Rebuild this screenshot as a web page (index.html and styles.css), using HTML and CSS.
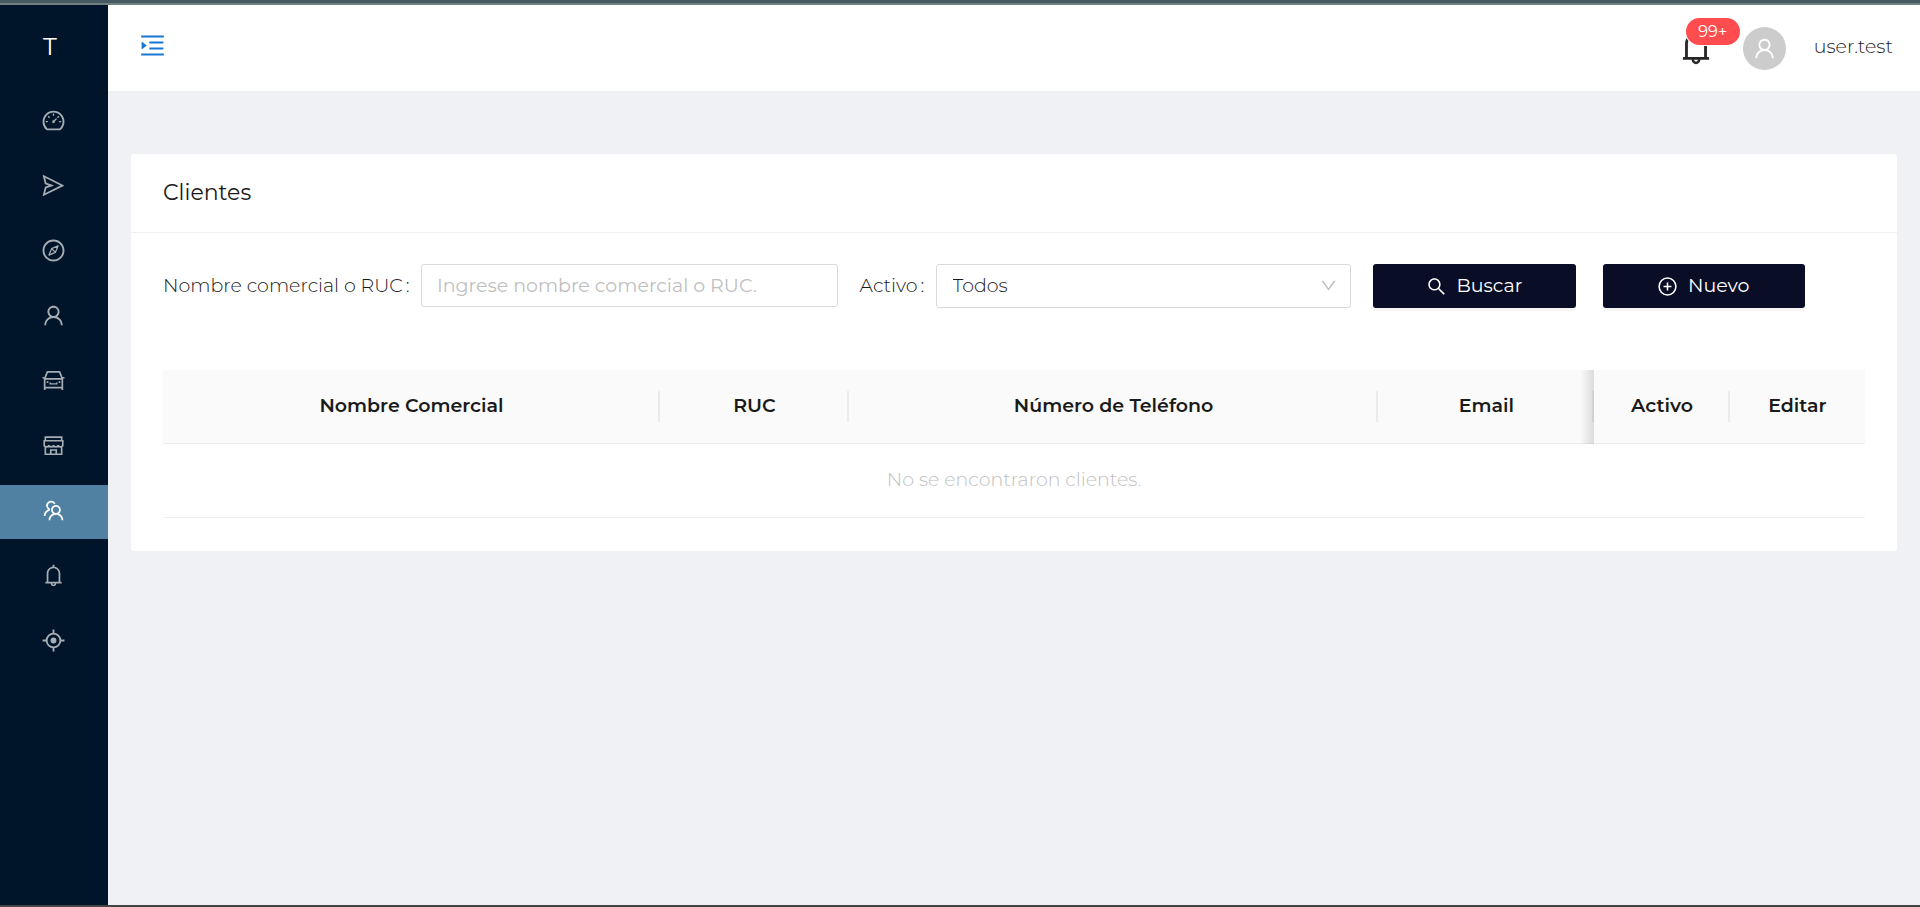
FILE: index.html
```html
<!DOCTYPE html>
<html lang="es">
<head>
<meta charset="utf-8">
<meta name="viewport" content="width=device-width, initial-scale=1">
<title>Clientes</title>
<link rel="stylesheet" href="styles.css">
</head>
<body>
<div class="app">
  <aside class="sider">
    <div class="logo">T</div>
    <nav class="menu" aria-label="Principal">
      <a class="menu-item" href="#panel" aria-label="Panel">
        <svg class="icon" viewBox="0 0 1024 1024"><path d="M924.8 385.6a446.7 446.7 0 00-96-142.4 446.7 446.7 0 00-142.4-96C631.1 123.8 572.5 112 512 112s-119.1 11.8-174.4 35.2a446.7 446.7 0 00-142.4 96 446.7 446.7 0 00-96 142.4C75.8 440.9 64 499.5 64 560c0 132.7 58.3 257.7 159.9 343.1l1.7 1.4c5.8 4.8 13.1 7.5 20.6 7.5h531.7c7.5 0 14.8-2.7 20.6-7.5l1.7-1.4C901.7 817.7 960 692.7 960 560c0-60.5-11.9-119.1-35.2-174.4zM761.4 836H262.6A371.12 371.12 0 01140 560c0-99.4 38.7-192.8 109-263 70.3-70.3 163.7-109 263-109 99.4 0 192.8 38.7 263 109 70.3 70.3 109 163.7 109 263 0 105.6-44.5 205.5-122.6 276z"/><path d="M623.5 421.5a8.03 8.03 0 00-11.3 0L527.7 506c-18.7-5-39.4-.2-54.1 14.5a55.95 55.95 0 000 79.2 55.95 55.95 0 0079.2 0 55.87 55.87 0 0014.5-54.1l84.5-84.5c3.1-3.1 3.1-8.2 0-11.3l-28.3-28.3z"/><path class="line" stroke-width="56" d="M512 224v96M194 560h88M742 560h88M292 340l58 58M732 340l-58 58"/></svg>
      </a>
      <a class="menu-item" href="#envios" aria-label="Envíos">
        <svg class="icon" viewBox="0 0 1024 1024"><path d="M931.4 498.9L94.9 79.5c-3.4-1.7-7.3-2.1-11-1.2a15.99 15.99 0 00-11.7 19.3l86.2 352.2c1.3 5.3 5.2 9.6 10.4 11.3l147.7 50.7-147.6 50.7c-5.2 1.8-9.1 6-10.3 11.3L72.2 926.5c-.9 3.7-.5 7.6 1.2 10.9 3.9 7.9 13.5 11.1 21.5 7.2l836.5-417c3.1-1.5 5.6-4.1 7.2-7.1 3.9-8 .7-17.6-7.2-21.6zM170.8 826.3l50.3-205.6 295.2-101.3c2.3-.8 4.2-2.6 5-5 1.4-4.2-.8-8.7-5-10.2L221.1 403 171 198.2l628 314.9-628.2 313.2z"/></svg>
      </a>
      <a class="menu-item" href="#rutas" aria-label="Rutas">
        <svg class="icon" viewBox="0 0 1024 1024"><path fill-rule="evenodd" d="M512 64C264.6 64 64 264.6 64 512s200.6 448 448 448 448-200.6 448-448S759.4 64 512 64zm0 820c-205.4 0-372-166.6-372-372s166.6-372 372-372 372 166.6 372 372-166.6 372-372 372z"/><path class="line" stroke-width="52" stroke-linejoin="round" d="M698 326L435 435 326 698 589 589zM435 435L589 589"/></svg>
      </a>
      <a class="menu-item" href="#usuarios" aria-label="Usuarios">
        <svg class="icon" viewBox="0 0 1024 1024"><path id="user-shape" d="M858.5 763.6a374 374 0 00-80.6-119.5 375.63 375.63 0 00-119.5-80.6c-.4-.2-.8-.3-1.2-.5C719.5 518 760 444.7 760 362c0-137-111-248-248-248S264 225 264 362c0 82.7 40.5 156 102.8 201.1-.4.2-.8.3-1.2.5-44.8 18.9-85 46-119.5 80.6a375.63 375.63 0 00-80.6 119.5A371.7 371.7 0 00136 901.8a8 8 0 008 8.2h60c4.4 0 7.9-3.5 8-7.8 2-77.2 33-149.5 87.8-204.3 56.7-56.7 132-87.9 212.2-87.9s155.5 31.2 212.2 87.9C779 752.7 810 825 812 902.2c.1 4.4 3.6 7.8 8 7.8h60a8 8 0 008-8.2c-1-47.8-10.9-94.3-29.5-138.2zM512 534c-45.9 0-89.1-17.9-121.6-50.4S340 407.9 340 362c0-45.9 17.9-89.1 50.4-121.6S466.1 190 512 190s89.1 17.9 121.6 50.4S684 316.1 684 362c0 45.9-17.9 89.1-50.4 121.6S557.9 534 512 534z"/></svg>
      </a>
      <a class="menu-item" href="#vehiculos" aria-label="Vehículos">
        <svg class="icon" viewBox="0 0 1024 1024"><path class="line" stroke-width="70" stroke-linejoin="round" d="M150 896V440L262 158H762L874 440V896M150 444H874M150 806H874"/><path class="line" stroke-width="60" d="M64 398h90M870 398h90M378 590v60h268v-60"/><path d="M232 546h72v72h-72zM720 546h72v72h-72z"/></svg>
      </a>
      <a class="menu-item" href="#tiendas" aria-label="Tiendas">
        <svg class="icon" viewBox="0 0 1024 1024"><path class="line" stroke-width="68" d="M178 310V168H846V310M98 316H926M132 316V490a95 80 0 00190 0 95 80 0 00190 0 95 80 0 00190 0 95 80 0 00190 0V316M178 560V872H846V560M400 872V696H624V872"/></svg>
      </a>
      <a class="menu-item active" href="#clientes" aria-label="Clientes" aria-current="page">
        <svg class="icon" viewBox="0 0 1024 1024"><path d="M824.2 699.9a301.55 301.55 0 00-86.4-60.4C783.1 602.8 812 546.8 812 484c0-110.8-92.4-201.7-203.2-200-109.1 1.7-197 90.6-197 200 0 62.8 29 118.8 74.2 155.5a300.95 300.95 0 00-86.4 60.4C345 754.6 314 826.8 312 903.8a8 8 0 008 8.2h56c4.3 0 7.9-3.4 8-7.7 1.9-58 25.4-112.3 66.7-153.5A226.62 226.62 0 01612 684c60.9 0 118.2 23.7 161.3 66.8C814.6 792 838 846.3 840 904.3c.1 4.3 3.7 7.7 8 7.7h56a8 8 0 008-8.2c-2-77-33-149.2-87.8-203.9zM612 612c-34.2 0-66.4-13.3-90.5-37.5a126.86 126.86 0 01-37.5-91.8c.3-32.8 13.4-64.5 36.3-88 24-24.6 56.1-38.3 90.4-38.7 33.9-.3 66.8 12.9 91 36.6 24.8 24.3 38.4 56.8 38.4 91.4 0 34.2-13.3 66.3-37.5 90.5A127.3 127.3 0 01612 612zM361.5 510.4c-.9-8.7-1.4-17.5-1.4-26.4 0-15.9 1.5-31.4 4.3-46.5.7-3.6-1.2-7.3-4.5-8.8-13.6-6.1-26.1-14.5-36.9-25.1a127.54 127.54 0 01-38.7-95.4c.9-32.1 13.8-62.6 36.3-85.6 24.7-25.3 57.9-39.1 93.2-38.7 31.9.3 62.7 12.6 86 34.4 7.9 7.4 14.7 15.6 20.4 24.4 2 3.1 5.9 4.4 9.3 3.2 17.6-6.1 36.2-10.4 55.3-12.4 5.6-.6 8.8-6.6 6.3-11.6-32.5-64.3-98.9-108.7-175.7-109.9-110.9-1.7-203.3 89.2-203.3 199.9 0 62.8 28.9 118.8 74.2 155.5-31.8 14.7-61.1 35-86.5 60.4-54.8 54.7-85.8 126.9-87.8 204a8 8 0 008 8.2h56.1c4.3 0 7.9-3.4 8-7.7 1.9-58 25.4-112.3 66.7-153.5 29.4-29.4 65.4-49.8 104.7-59.7 3.9-1 6.5-4.7 6-8.7z"/></svg>
      </a>
      <a class="menu-item" href="#alertas" aria-label="Alertas">
        <svg class="icon" viewBox="0 0 1024 1024"><path id="bell-shape" d="M816 768h-24V428c0-141.1-104.3-257.8-240-277.2V112c0-22.1-17.9-40-40-40s-40 17.9-40 40v38.8C336.3 170.2 232 286.9 232 428v340h-24c-17.7 0-32 14.3-32 32v32c0 4.4 3.6 8 8 8h216c0 61.8 50.2 112 112 112s112-50.2 112-112h216c4.4 0 8-3.6 8-8v-32c0-17.7-14.3-32-32-32zM512 888c-26.5 0-48-21.5-48-48h96c0 26.5-21.5 48-48 48zM304 768V428c0-55.6 21.6-107.8 60.9-147.1S456.4 220 512 220s107.8 21.6 147.1 60.9S720 372.4 720 428v340H304z"/></svg>
      </a>
      <a class="menu-item" href="#ubicacion" aria-label="Ubicación">
        <svg class="icon" viewBox="0 0 1024 1024"><circle class="line" stroke-width="76" cx="512" cy="512" r="282"/><circle cx="512" cy="512" r="120"/><path class="line" stroke-width="76" d="M512 64v170M512 790v170M64 512h170M790 512h170"/></svg>
      </a>
    </nav>
  </aside>

  <div class="main">
    <header class="header">
      <button class="toggle" type="button" aria-label="Expandir menú">
        <svg class="icon" viewBox="0 0 1024 1024"><path d="M408 442h480c4.400 0 8-3.600 8-8v-56c0-4.400-3.600-8-8-8H408c-4.400 0-8 3.600-8 8v56c0 4.400 3.600 8 8 8zm-8 204c0 4.400 3.600 8 8 8h480c4.400 0 8-3.600 8-8v-56c0-4.400-3.600-8-8-8H408c-4.400 0-8 3.600-8 8v56zm504-486H120c-4.400 0-8 3.600-8 8v56c0 4.400 3.600 8 8 8h784c4.400 0 8-3.600 8-8v-56c0-4.400-3.600-8-8-8zm0 632H120c-4.400 0-8 3.600-8 8v56c0 4.400 3.600 8 8 8h784c4.400 0 8-3.600 8-8v-56c0-4.400-3.600-8-8-8zM142.400 642.100L298.700 519a8.840 8.840 0 000-13.900L142.400 381.900c-5.800-4.600-14.400-.5-14.400 6.900v246.300a8.900 8.900 0 0014.400 7z"/></svg>
      </button>
      <div class="session">
        <button class="bell" type="button" aria-label="Notificaciones">
          <svg class="icon" viewBox="0 0 1024 1024"><use href="#bell-shape"/></svg>
          <span class="badge">99+</span>
        </button>
        <span class="avatar"><svg class="icon" viewBox="0 0 1024 1024"><use href="#user-shape"/></svg></span>
        <span class="username">user.test</span>
      </div>
    </header>

    <main class="content">
      <section class="card">
        <h1 class="card-title">Clientes</h1>
        <div class="card-body">
          <form class="filters">
            <div class="field field-name">
              <label for="nombre">Nombre comercial o RUC<span class="colon">:</span></label>
              <input class="control" id="nombre" type="text" placeholder="Ingrese nombre comercial o RUC.">
            </div>
            <div class="field field-active">
              <label for="activo">Activo<span class="colon">:</span></label>
              <div class="select">
                <select class="control" id="activo"><option>Todos</option><option>Sí</option><option>No</option></select>
                <svg class="arrow" viewBox="0 0 1024 1024"><path d="M884 256h-75c-5.100 0-9.900 2.500-12.900 6.600L512 654.200 227.900 262.600c-3-4.100-7.800-6.600-12.900-6.600h-75c-6.500 0-10.300 7.400-6.500 12.700l352.600 486.100c12.800 17.600 39 17.600 51.700 0l352.600-486.100c3.900-5.300.1-12.700-6.400-12.700z"/></svg>
              </div>
            </div>
            <div class="actions">
              <button class="btn" type="button">
                <svg class="icon" viewBox="0 0 1024 1024"><path d="M909.6 854.5L649.9 594.8C690.2 542.7 712 479 712 412c0-80.2-31.300-155.400-87.900-212.100-56.600-56.700-132-87.900-212.100-87.900s-155.500 31.300-212.100 87.900C143.200 256.500 112 331.800 112 412c0 80.100 31.300 155.500 87.900 212.100C256.500 680.800 331.800 712 412 712c67 0 130.600-21.800 182.700-62l259.700 259.600a8.200 8.200 0 0011.600 0l43.600-43.500a8.200 8.200 0 000-11.600zM570.400 570.400C528 612.700 471.800 636 412 636s-116-23.300-158.400-65.600C211.300 528 188 471.800 188 412s23.300-116.100 65.600-158.400C296 211.300 352.200 188 412 188s116.100 23.200 158.400 65.600S636 352.200 636 412s-23.300 116.100-65.600 158.400z"/></svg>
                Buscar
              </button>
              <button class="btn" type="button">
                <svg class="icon" viewBox="0 0 1024 1024"><circle class="line" stroke-width="76" cx="512" cy="512" r="410"/><path class="line" stroke-width="76" d="M512 320v384M320 512h384"/></svg>
                Nuevo
              </button>
            </div>
          </form>

          <table class="table">
            <colgroup><col class="c-name"><col class="c-ruc"><col class="c-phone"><col class="c-email"><col class="c-small"><col class="c-small"></colgroup>
            <thead>
              <tr><th>Nombre Comercial</th><th>RUC</th><th>Número de Teléfono</th><th>Email</th><th class="pinned">Activo</th><th>Editar</th></tr>
            </thead>
            <tbody>
              <tr><td colspan="6">No se encontraron clientes.</td></tr>
            </tbody>
          </table>
        </div>
      </section>
    </main>
  </div>
</div>
</body>
</html>
```

FILE: styles.css
```css
* {
  box-sizing: border-box;
}

body {
  margin: 0;
  color: #1a1a1a;
  background: #f0f1f5;
  font: 300 19px/30px Montserrat, Inter, "Open Sans", sans-serif;
}

button,
input,
select {
  font: inherit;
  color: inherit;
}

.app {
  display: flex;
  min-height: 100vh;
  border-top: 3px solid #455a62;
  border-bottom: 2px solid #444444;
}

.icon {
  display: block;
  width: 25px;
  height: 25px;
  fill: currentColor;
}

.line {
  fill: none;
  stroke: currentColor;
}

/* Sidebar */
.sider {
  flex: 0 0 108px;
  border-top: 2px solid #70827f;
  background: #001529;
}

.logo {
  padding: 24px 43px 0;
  color: #ffffff;
  font-size: 24px;
  font-weight: 400;
  line-height: 36px;
}

.menu {
  display: flex;
  flex-direction: column;
  gap: 11px;
  padding-top: 30px;
}

.menu-item {
  display: flex;
  align-items: center;
  justify-content: center;
  height: 54px;
  padding: 0 1px 4px 0;
  color: #a6adb4;
}

.menu-item.active {
  color: #ffffff;
  background: #5081a2;
}

/* Header */
.main {
  flex: 1;
  min-width: 0;
  border-top: 2px solid #70827f;
}

.header {
  display: flex;
  align-items: center;
  justify-content: space-between;
  height: 86px;
  padding: 0 27px 6px 30px;
  background: #ffffff;
}

.toggle,
.bell {
  padding: 0;
  border: 0;
  background: none;
}

.toggle {
  color: #1976d2;
}

.toggle .icon {
  width: 29px;
  height: 29px;
}

.session {
  display: flex;
  align-items: center;
  margin-top: 4px;
}

.bell {
  position: relative;
  margin-right: 27px;
  color: #262626;
}

.bell .icon {
  width: 40px;
  height: 40px;
}

.badge {
  position: absolute;
  top: -9px;
  left: 10px;
  width: 54px;
  height: 27px;
  border-radius: 14px;
  color: #ffffff;
  background: #ff4d4f;
  box-shadow: 0 0 0 1px #ffffff;
  font-size: 16px;
  font-weight: 400;
  line-height: 27px;
  text-align: center;
}

.avatar {
  display: flex;
  align-items: center;
  justify-content: center;
  width: 43px;
  height: 43px;
  margin: 2px 28px 0 0;
  border-radius: 50%;
  color: #ffffff;
  background: #cccccc;
}

/* Card */
.content {
  padding: 63px 23px;
}

.card {
  border-radius: 3px;
  background: #ffffff;
}

.card-title {
  margin: 0;
  padding: 23px 32px 24px;
  border-bottom: 1px solid #f0f0f0;
  font-size: 22px;
  font-weight: 400;
  line-height: 31px;
}

.card-body {
  padding: 31px 32px 33px;
}

.filters {
  display: flex;
  gap: 22px;
  margin-bottom: 62px;
  padding-right: 60px;
}

.field {
  display: flex;
  align-items: center;
  min-width: 0;
}

.field-name {
  flex: 675 1 0;
}

.field-active {
  flex: 492 1 0;
}

.field label {
  flex: none;
  white-space: nowrap;
}

.field-name label {
  width: 258px;
}

.field-active label {
  width: 76px;
}

.colon {
  padding-left: 3px;
}

.control {
  width: 100%;
  min-width: 0;
  height: 44px;
  padding: 0 16px;
  border: 1px solid #d9d9d9;
  border-radius: 3px;
  background: #ffffff;
}

.field-name .control {
  align-self: flex-start;
  height: 43px;
  padding: 0 15px;
}

.control::placeholder {
  color: #bfbfbf;
  font-weight: 400;
  opacity: 1;
}

.select {
  position: relative;
  flex: 1;
}

.select .control {
  display: block;
  appearance: none;
}

.arrow {
  position: absolute;
  top: 12px;
  right: 13px;
  width: 19px;
  height: 19px;
  fill: #bfbfbf;
  pointer-events: none;
}

.actions {
  display: flex;
  flex: 432 1 0;
  gap: 27px;
}

.btn {
  display: flex;
  flex: 1;
  align-items: center;
  justify-content: center;
  gap: 10px;
  height: 44px;
  padding: 0 1px 0 0;
  border: 0;
  border-radius: 3px;
  color: #ffffff;
  background: #090d26;
  box-shadow: 0 3px 0 #f5f5f5;
  font-weight: 400;
}

.btn .icon {
  width: 21px;
  height: 21px;
}

/* Table */
.table {
  width: 100%;
  border-spacing: 0;
  table-layout: fixed;
}

.c-name { width: 29.2%; }
.c-ruc { width: 11.1%; }
.c-phone { width: 31.1%; }
.c-email { width: 12.7%; }
.c-small { width: 7.95%; }

.table th {
  position: relative;
  height: 74px;
  padding: 0 16px 1px;
  border-bottom: 1px solid #ebebeb;
  background: #fafafa;
  font-weight: 600;
}

.table th:not(:last-child)::before {
  content: "";
  position: absolute;
  top: 21px;
  right: 0;
  width: 2px;
  height: 31px;
  background: #ebebeb;
}

.table .pinned::after {
  content: "";
  position: absolute;
  top: 0;
  right: 100%;
  bottom: -1px;
  width: 14px;
  background: linear-gradient(to left, rgba(0, 0, 0, 0.12), rgba(0, 0, 0, 0));
}

.table td {
  height: 74px;
  padding: 0 16px 2px;
  border-bottom: 1px solid #f0f0f0;
  color: #bfbfbf;
  text-align: center;
}
```
